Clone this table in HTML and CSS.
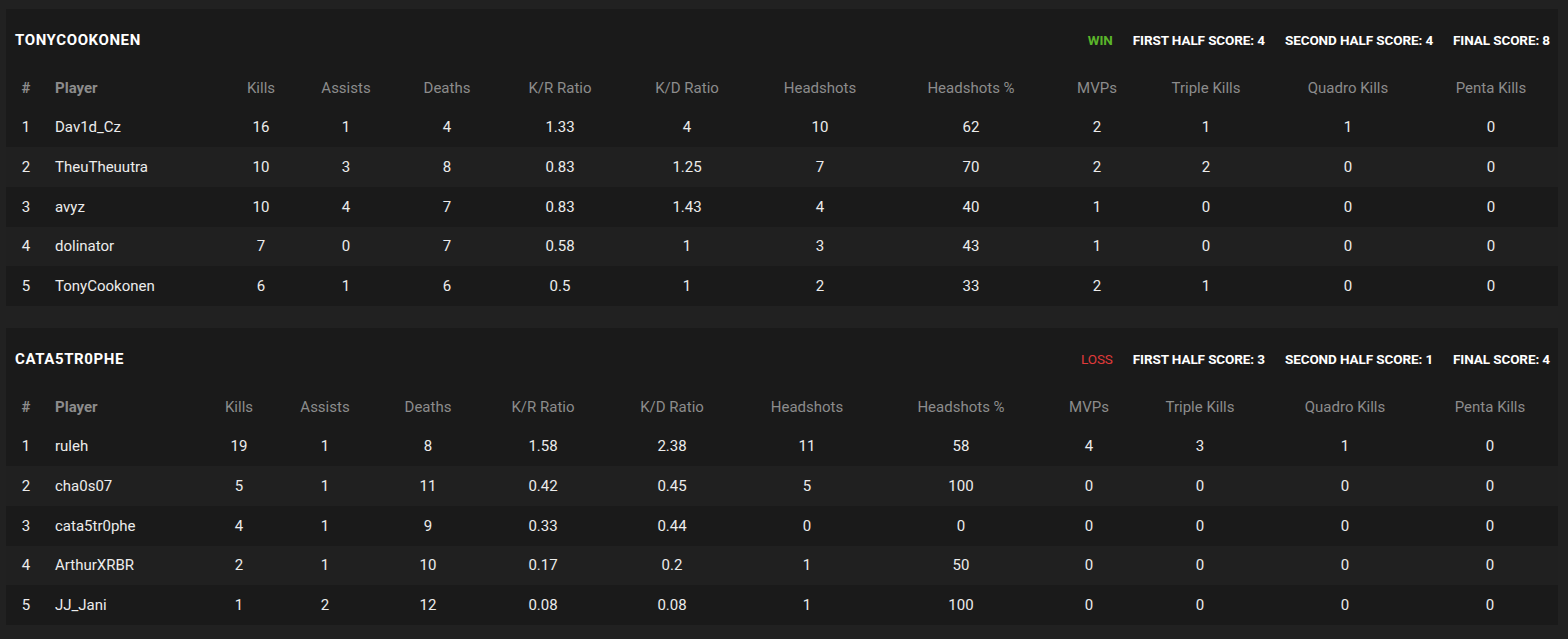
FILE: index.html
```html
<!DOCTYPE html>
<html lang="en">
<head>
<meta charset="utf-8">
<title>Match scoreboard</title>
<link rel="stylesheet" href="styles.css">
</head>
<body>
<section class="team team-a">
  <header class="team-head">
    <h2 class="team-name">TonyCookonen</h2>
    <div class="scores">
      <span class="result win">WIN</span>
      <span class="score">FIRST HALF SCORE: 4</span>
      <span class="score">SECOND HALF SCORE: 4</span>
      <span class="score">FINAL SCORE: 8</span>
    </div>
  </header>
  <table class="stats">
    <colgroup>
      <col class="c1"><col class="c2"><col class="c3"><col class="c4"><col class="c5"><col class="c6"><col class="c7"><col class="c8"><col class="c9"><col class="c10"><col class="c11"><col class="c12"><col class="c13">
    </colgroup>
    <thead>
      <tr><th class="num">#</th><th class="player">Player</th><th>Kills</th><th>Assists</th><th>Deaths</th><th>K/R Ratio</th><th>K/D Ratio</th><th>Headshots</th><th>Headshots %</th><th>MVPs</th><th>Triple Kills</th><th>Quadro Kills</th><th>Penta Kills</th></tr>
    </thead>
    <tbody>
      <tr><td class="num">1</td><td class="player">Dav1d_Cz</td><td>16</td><td>1</td><td>4</td><td>1.33</td><td>4</td><td>10</td><td>62</td><td>2</td><td>1</td><td>1</td><td>0</td></tr>
      <tr><td class="num">2</td><td class="player">TheuTheuutra</td><td>10</td><td>3</td><td>8</td><td>0.83</td><td>1.25</td><td>7</td><td>70</td><td>2</td><td>2</td><td>0</td><td>0</td></tr>
      <tr><td class="num">3</td><td class="player">avyz</td><td>10</td><td>4</td><td>7</td><td>0.83</td><td>1.43</td><td>4</td><td>40</td><td>1</td><td>0</td><td>0</td><td>0</td></tr>
      <tr><td class="num">4</td><td class="player">dolinator</td><td>7</td><td>0</td><td>7</td><td>0.58</td><td>1</td><td>3</td><td>43</td><td>1</td><td>0</td><td>0</td><td>0</td></tr>
      <tr><td class="num">5</td><td class="player">TonyCookonen</td><td>6</td><td>1</td><td>6</td><td>0.5</td><td>1</td><td>2</td><td>33</td><td>2</td><td>1</td><td>0</td><td>0</td></tr>
    </tbody>
  </table>
</section>

<section class="team team-b">
  <header class="team-head">
    <h2 class="team-name">CATA5TR0PHE</h2>
    <div class="scores">
      <span class="result loss">LOSS</span>
      <span class="score">FIRST HALF SCORE: 3</span>
      <span class="score">SECOND HALF SCORE: 1</span>
      <span class="score">FINAL SCORE: 4</span>
    </div>
  </header>
  <table class="stats">
    <colgroup>
      <col class="c1"><col class="c2"><col class="c3"><col class="c4"><col class="c5"><col class="c6"><col class="c7"><col class="c8"><col class="c9"><col class="c10"><col class="c11"><col class="c12"><col class="c13">
    </colgroup>
    <thead>
      <tr><th class="num">#</th><th class="player">Player</th><th>Kills</th><th>Assists</th><th>Deaths</th><th>K/R Ratio</th><th>K/D Ratio</th><th>Headshots</th><th>Headshots %</th><th>MVPs</th><th>Triple Kills</th><th>Quadro Kills</th><th>Penta Kills</th></tr>
    </thead>
    <tbody>
      <tr><td class="num">1</td><td class="player">ruleh</td><td>19</td><td>1</td><td>8</td><td>1.58</td><td>2.38</td><td>11</td><td>58</td><td>4</td><td>3</td><td>1</td><td>0</td></tr>
      <tr><td class="num">2</td><td class="player">cha0s07</td><td>5</td><td>1</td><td>11</td><td>0.42</td><td>0.45</td><td>5</td><td>100</td><td>0</td><td>0</td><td>0</td><td>0</td></tr>
      <tr><td class="num">3</td><td class="player">cata5tr0phe</td><td>4</td><td>1</td><td>9</td><td>0.33</td><td>0.44</td><td>0</td><td>0</td><td>0</td><td>0</td><td>0</td><td>0</td></tr>
      <tr><td class="num">4</td><td class="player">ArthurXRBR</td><td>2</td><td>1</td><td>10</td><td>0.17</td><td>0.2</td><td>1</td><td>50</td><td>0</td><td>0</td><td>0</td><td>0</td></tr>
      <tr><td class="num">5</td><td class="player">JJ_Jani</td><td>1</td><td>2</td><td>12</td><td>0.08</td><td>0.08</td><td>1</td><td>100</td><td>0</td><td>0</td><td>0</td><td>0</td></tr>
    </tbody>
  </table>
</section>
</body>
</html>
```

FILE: styles.css
```css
html, body {
  background: #212121;
}
body {
  margin: 0;
  padding: 9px 10px 14px 6px;
  font-family: Roboto, "Liberation Sans", sans-serif;
  color: #e6e6e6;
  display: flex;
  flex-direction: column;
  gap: 22px;
}
.team {
  background: #1a1a1a;
  height: 297px;
}
.team-head {
  height: 59px;
  box-sizing: border-box;
  padding: 2px 8px 0 9px;
  display: flex;
  align-items: center;
  justify-content: space-between;
}
.team-name {
  margin: 0;
  font-size: 15px;
  font-weight: 700;
  text-transform: uppercase;
  color: #ffffff;
  letter-spacing: 0.6px;
}
.scores {
  display: flex;
  gap: 20px;
  font-size: 13.5px;
  font-weight: 700;
  color: #ffffff;
  letter-spacing: -0.1px;
}
.result.win { color: #5ab52a; }
.result.loss { color: #e03a3a; font-weight: 400; }
.stats {
  width: 100%;
  border-collapse: collapse;
  table-layout: fixed;
  font-size: 15px;
}
.stats tr {
  height: 39.67px;
}
.stats th, .stats td {
  padding: 0;
  text-align: center;
  vertical-align: middle;
  white-space: nowrap;
}
.stats th {
  font-weight: 400;
  color: #8c8c8c;
}
.stats th.num, .stats th.player {
  font-weight: 700;
  color: #8c8c8c;
}
.stats .player {
  text-align: left;
  padding-left: 9px;
}
.stats tbody tr:nth-child(even) {
  background: #202020;
}
.stats td {
  color: #ececec;
}

.team-a .c1 { width: 40px; }
.team-a .c2 { width: 180px; }
.team-a .c3 { width: 70px; }
.team-a .c4 { width: 100px; }
.team-a .c5 { width: 102px; }
.team-a .c6 { width: 124px; }
.team-a .c7 { width: 130px; }
.team-a .c8 { width: 136px; }
.team-a .c9 { width: 166px; }
.team-a .c10 { width: 86px; }
.team-a .c11 { width: 132px; }
.team-a .c12 { width: 152px; }
.team-a .c13 { width: 134px; }

.team-b .c1 { width: 40px; }
.team-b .c2 { width: 158px; }
.team-b .c3 { width: 70px; }
.team-b .c4 { width: 102px; }
.team-b .c5 { width: 104px; }
.team-b .c6 { width: 126px; }
.team-b .c7 { width: 132px; }
.team-b .c8 { width: 138px; }
.team-b .c9 { width: 170px; }
.team-b .c10 { width: 86px; }
.team-b .c11 { width: 136px; }
.team-b .c12 { width: 154px; }
.team-b .c13 { width: 136px; }
```
